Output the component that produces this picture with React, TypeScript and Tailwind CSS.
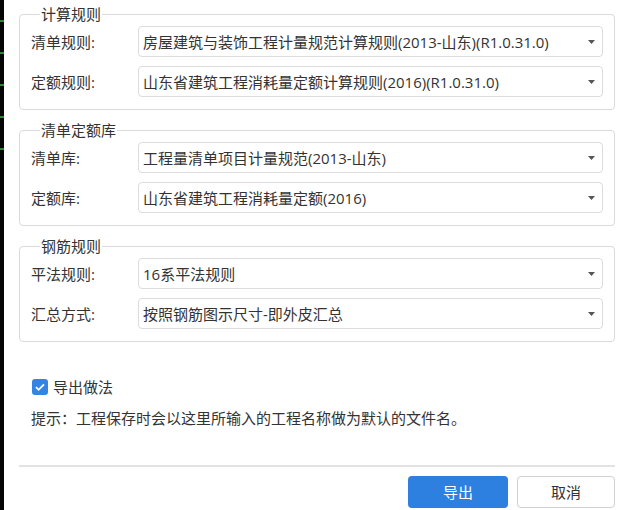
import React, { useState } from 'react';

const font = { fontFamily: '"Open Sans", "Noto Sans CJK SC", "Noto Sans", sans-serif' };

const Select: React.FC<{ value: string }> = ({ value }) => (
    <div className="flex-1 h-[31px] flex items-center justify-between border border-[#dcdcdc] rounded-[4px] bg-white pl-[4px] pr-[7px]">
        <span className="text-[15px] leading-[20px] text-[#333]">{value}</span>
        <svg width="7" height="4" viewBox="0 0 7 4"><path d="M0 0h7L3.5 4z" fill="#555" /></svg>
    </div>
);

const Row: React.FC<{ label: string; value: string }> = ({ label, value }) => (
    <div className="flex items-center">
        <span className="w-[107px] text-[15px] leading-[20px] text-[#333]">{label}</span>
        <Select value={value} />
    </div>
);

const Group: React.FC<{ title: string; rows: [string, string][] }> = ({ title, rows }) => (
    <fieldset className="border border-[#dadada] rounded-[4px] px-[11px] pt-[2px] pb-[12px] flex flex-col gap-[9px]">
        <legend className="ml-[9px] px-[1px] text-[15px] leading-[20px] text-[#333]">{title}</legend>
        {rows.map(([l, v]) => <Row key={l} label={l} value={v} />)}
    </fieldset>
);

export default function App() {
    const [checked, setChecked] = useState(true);
    return (
        <div className="w-[628px] h-[510px] flex bg-white overflow-hidden" style={font}>
            {/* background peeking on the left */}
            <div className="w-[4px] bg-[#050505] flex flex-col gap-[30px] pt-[20px]">
                <div className="h-[2px] bg-[#2a8a2a]" />
                <div className="h-[2px] bg-[#2a8a2a]" />
                <div className="h-[2px] bg-[#2a8a2a]" />
                <div className="h-[2px] bg-[#2a8a2a]" />
                <div className="h-[2px] bg-[#2a8a2a]" />
            </div>
            <div className="flex-1 flex flex-col pl-[15px] pr-[13px] pt-[4px]">
                <div className="flex flex-col gap-[10px]">
                    <Group title="计算规则" rows={[
                        ['清单规则:', '房屋建筑与装饰工程计量规范计算规则(2013-山东)(R1.0.31.0)'],
                        ['定额规则:', '山东省建筑工程消耗量定额计算规则(2016)(R1.0.31.0)'],
                    ]} />
                    <Group title="清单定额库" rows={[
                        ['清单库:', '工程量清单项目计量规范(2013-山东)'],
                        ['定额库:', '山东省建筑工程消耗量定额(2016)'],
                    ]} />
                    <Group title="钢筋规则" rows={[
                        ['平法规则:', '16系平法规则'],
                        ['汇总方式:', '按照钢筋图示尺寸-即外皮汇总'],
                    ]} />
                </div>
                <label className="mt-[35px] ml-[13px] flex items-center gap-[5px] text-[15px] leading-[20px] text-[#333]">
                    <button
                        onClick={() => setChecked(!checked)}
                        className={`w-[16px] h-[16px] rounded-[3px] flex items-center justify-center ${checked ? 'bg-[#3584e4]' : 'border border-[#999] bg-white'}`}
                    >
                        {checked && (
                            <svg width="12" height="12" viewBox="0 0 12 12"><path d="M2 6.2l2.6 2.6L10 3.4" stroke="#fff" strokeWidth="1.8" fill="none" /></svg>
                        )}
                    </button>
                    导出做法
                </label>
                <p className="mt-[11px] ml-[12px] text-[15px] leading-[20px] text-[#333]">提示：工程保存时会以这里所输入的工程名称做为默认的文件名。</p>
                <div className="mt-[37px] h-[2px] bg-[#e2e2e2]" />
                <div className="mt-[9px] flex justify-end gap-[9px]">
                    <button className="w-[100px] h-[32px] rounded-[4px] bg-[#2d7fe0] text-white text-[15px]">导出</button>
                    <button className="w-[98px] h-[32px] rounded-[4px] border border-[#d0d0d0] bg-white text-[#333] text-[15px]">取消</button>
                </div>
            </div>
        </div>
    );
}
